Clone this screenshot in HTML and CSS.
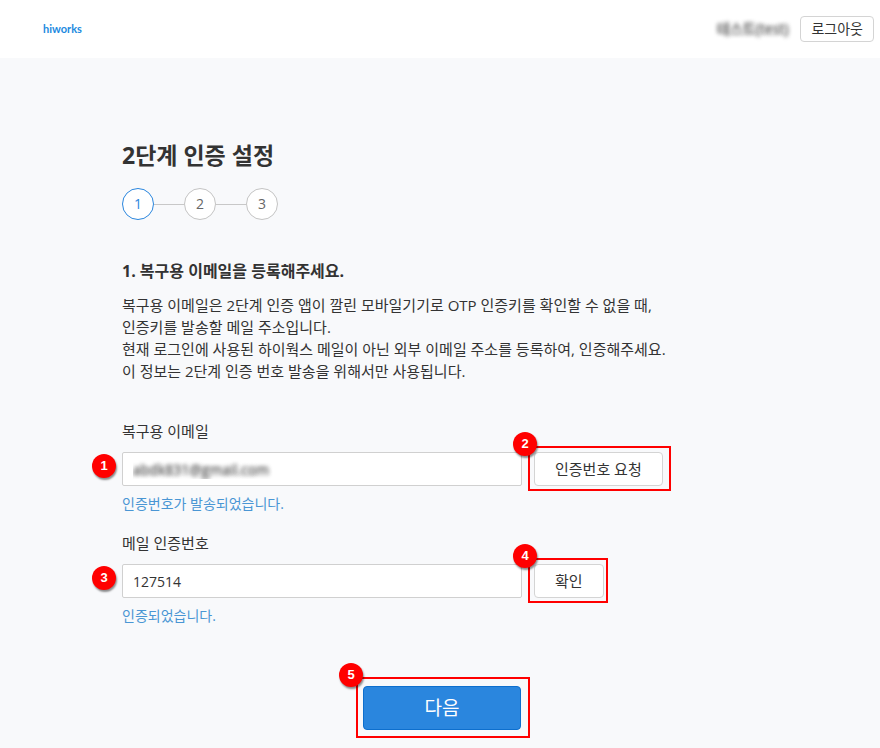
FILE: index.html
```html
<!DOCTYPE html>
<html lang="ko">
<head>
<meta charset="utf-8">
<meta name="viewport" content="width=device-width, initial-scale=1">
<title>2단계 인증 설정</title>
<link rel="stylesheet" href="styles.css">
</head>
<body>
<header class="topbar">
  <a class="logo" href="#">hiworks</a>
  <div class="account">
    <span class="user masked">테스트(test)</span>
    <button class="btn btn-small" type="button">로그아웃</button>
  </div>
</header>
<main class="page">
  <form class="setup">
    <h1>2단계 인증 설정</h1>
    <ol class="steps">
      <li class="step current">1</li>
      <li class="step">2</li>
      <li class="step">3</li>
    </ol>
    <h2>1. 복구용 이메일을 등록해주세요.</h2>
    <p class="intro">복구용 이메일은 2단계 인증 앱이 깔린 모바일기기로 OTP 인증키를 확인할 수 없을 때,<br>인증키를 발송할 메일 주소입니다.<br>현재 로그인에 사용된 하이웍스 메일이 아닌 외부 이메일 주소를 등록하여, 인증해주세요.<br>이 정보는 2단계 인증 번호 발송을 위해서만 사용됩니다.</p>

    <div class="field">
      <label for="email">복구용 이메일</label>
      <div class="row">
        <div class="control">
          <input class="masked" id="email" type="text" value="abdk831@gmail.com">
          <span class="badge badge-side">1</span>
        </div>
        <div class="marked">
          <button class="btn" type="button">인증번호 요청</button>
          <span class="frame"></span>
          <span class="badge badge-corner">2</span>
        </div>
      </div>
      <p class="hint">인증번호가 발송되었습니다.</p>
    </div>

    <div class="field">
      <label for="code">메일 인증번호</label>
      <div class="row">
        <div class="control">
          <input id="code" type="text" value="127514">
          <span class="badge badge-side">3</span>
        </div>
        <div class="marked">
          <button class="btn" type="button">확인</button>
          <span class="frame frame-narrow"></span>
          <span class="badge badge-corner">4</span>
        </div>
      </div>
      <p class="hint">인증되었습니다.</p>
    </div>

    <div class="actions">
      <div class="marked">
        <button class="btn btn-primary" type="button">다음</button>
        <span class="frame frame-wide"></span>
        <span class="badge badge-outer">5</span>
      </div>
    </div>
  </form>
</main>
</body>
</html>
```
FILE: styles.css
```css
* {
  box-sizing: border-box;
}

body {
  margin: 0;
  background: #f8f9fb;
  color: #333;
  font: 15px/22px "Open Sans", "Noto Sans CJK KR", sans-serif;
}

h1, h2, p, ol {
  margin: 0;
  padding: 0;
}

.topbar {
  display: flex;
  justify-content: space-between;
  align-items: center;
  height: 58px;
  padding: 0 6px 0 43px;
  background: #fff;
}

.logo {
  color: #1c8ae0;
  font: 700 11px/16px "Lato", sans-serif;
  text-decoration: none;
}

.account {
  display: flex;
  align-items: center;
  gap: 12px;
}

.user {
  font-size: 14px;
}

.masked {
  color: transparent;
  text-shadow: 0 0 4px #666, 0 0 4px #999;
}

.btn {
  height: 34px;
  padding: 0 20px;
  border: 1px solid #d4d4d4;
  border-radius: 4px;
  background: #fff;
  color: #333;
  font: inherit;
  white-space: nowrap;
}

.btn-small {
  height: 26px;
  padding: 0 10px;
  font-size: 14px;
  line-height: 20px;
}

.page {
  padding: 80px 0 18px 4px;
}

.setup {
  max-width: 640px;
  margin: 0 auto;
}

h1 {
  font-size: 23px;
  line-height: 34px;
  font-weight: 700;
}

.steps {
  display: flex;
  gap: 30px;
  margin-top: 16px;
  list-style: none;
  font-size: 14px;
}

.step {
  position: relative;
  width: 32px;
  height: 32px;
  border: 1px solid #c4c4c4;
  border-radius: 50%;
  background: #fff;
  color: #666;
  line-height: 30px;
  text-align: center;
}

.step + .step::before {
  content: "";
  position: absolute;
  top: 15px;
  right: 31px;
  width: 30px;
  height: 1px;
  background: #c8c8c8;
}

.current {
  border-color: #2a86de;
  color: #2a86de;
}

h2 {
  margin-top: 40px;
  font-size: 16px;
  line-height: 22px;
  font-weight: 700;
}

.intro {
  margin-top: 12px;
}

.field {
  margin-top: 8px;
}

.intro + .field {
  margin-top: 38px;
}

label {
  display: block;
}

.row {
  display: flex;
  gap: 12px;
  margin-top: 10px;
}

.control {
  position: relative;
  flex: 0 1 400px;
}

input {
  display: block;
  width: 100%;
  height: 34px;
  padding: 0 10px;
  border: 1px solid #d0d0d0;
  border-radius: 2px;
  background: #fff;
  color: #333;
  font: inherit;
  font-size: 14px;
}

input.masked {
  color: transparent;
}

.hint {
  margin-top: 6px;
  padding-bottom: 8px;
  color: #4a96d4;
  font-size: 14px;
  line-height: 24px;
}

.actions {
  display: flex;
  justify-content: center;
  margin-top: 50px;
}

.btn-primary {
  display: block;
  width: 158px;
  height: 44px;
  border-color: #0d6fce;
  background: #2a86de;
  color: #fff;
  font-size: 19px;
}

.marked {
  position: relative;
}

.frame {
  position: absolute;
  inset: -6px -8px -5px -6px;
  border: 2px solid #f00;
  pointer-events: none;
}

.frame-narrow {
  right: -4px;
}

.frame-wide {
  inset: -9px -9px -8px -7px;
}

.badge {
  position: absolute;
  width: 24px;
  height: 24px;
  border-radius: 50%;
  background: #f00;
  box-shadow: 1px 2px 2px rgba(0, 0, 0, 0.45);
  color: #fff;
  font: 700 13px/24px "Liberation Sans", sans-serif;
  text-align: center;
}

.badge-side {
  top: 2px;
  left: -30px;
}

.badge-corner {
  top: -20px;
  left: -21px;
}

.badge-outer {
  top: -23px;
  left: -24px;
}
```
